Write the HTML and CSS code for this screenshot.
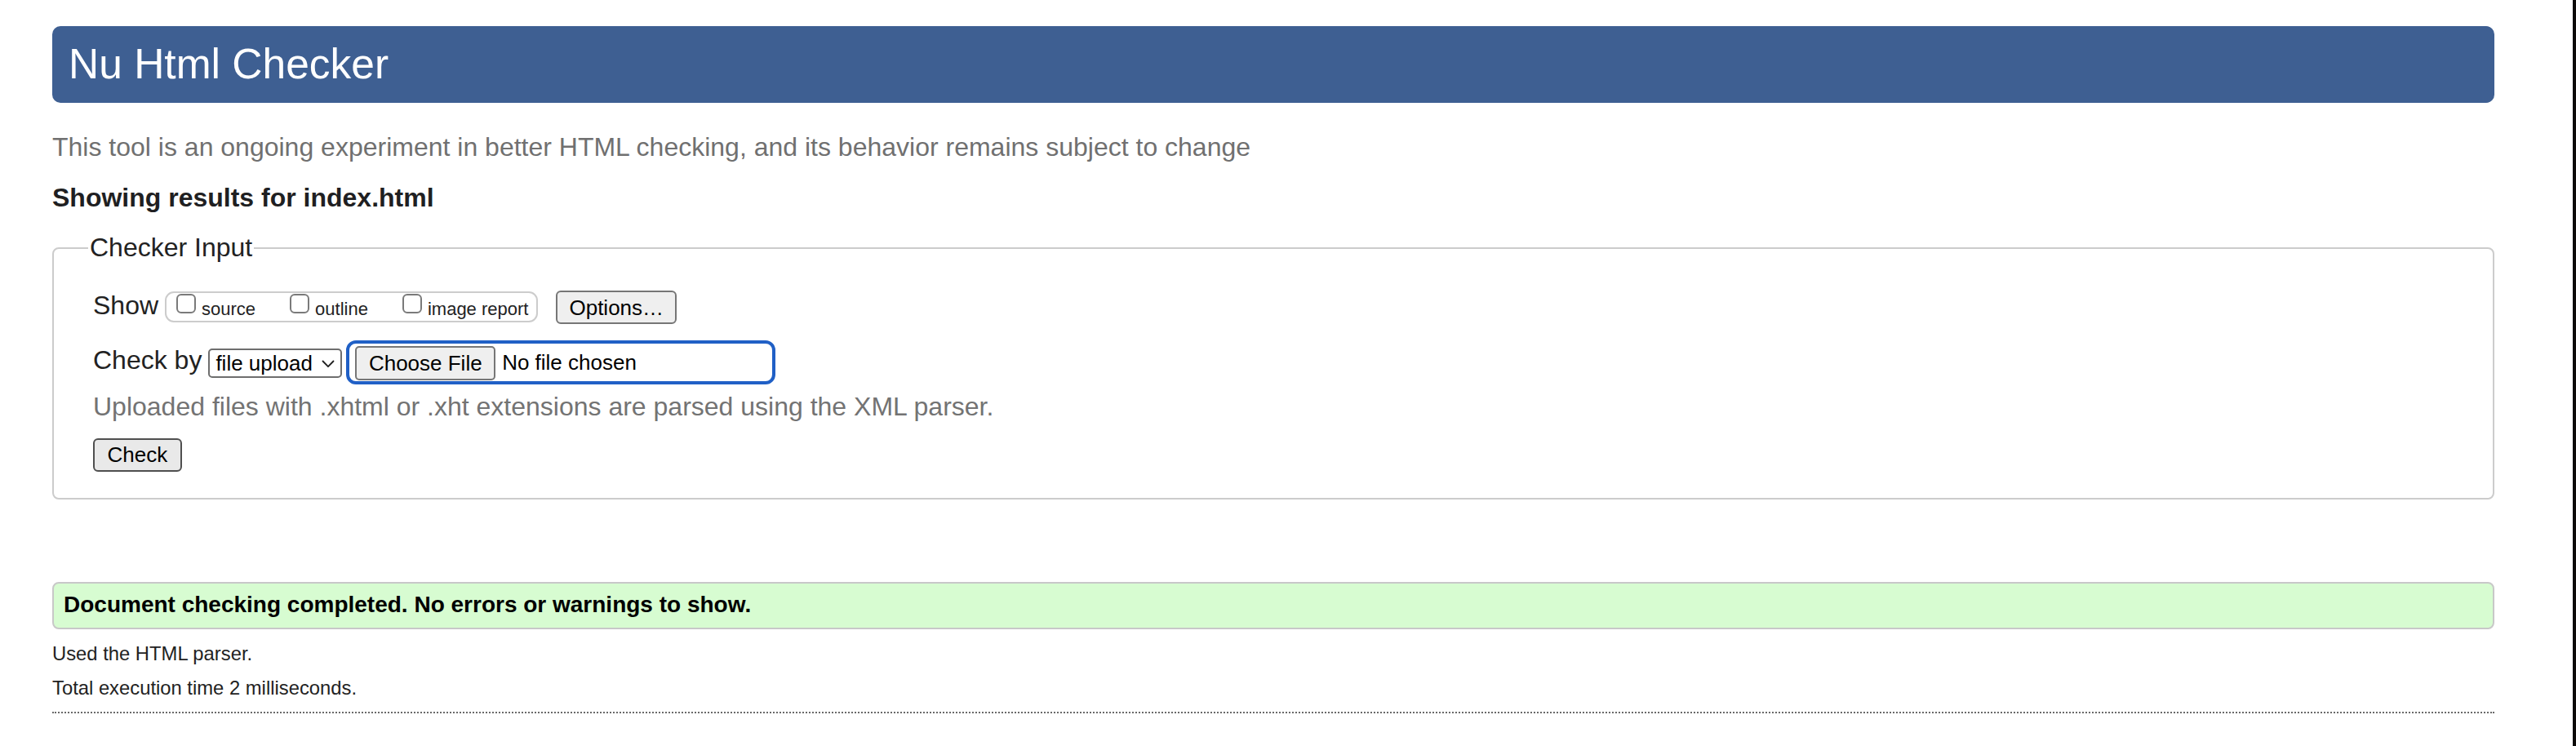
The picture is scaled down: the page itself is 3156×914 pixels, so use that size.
FILE: index.html
```html
<!DOCTYPE html>
<html lang="en">
<head>
<meta charset="utf-8">
<title>Nu Html Checker</title>
<link rel="stylesheet" href="styles.css">
</head>
<body>
<h1 class="banner">Nu Html Checker</h1>
<p class="intro">This tool is an ongoing experiment in better HTML checking, and its behavior remains subject to change</p>
<h2 class="results-for">Showing results for index.html</h2>
<form class="checker">
  <fieldset class="checker-input">
    <legend class="checker-legend">Checker Input</legend>
    <div class="row row-show">
      <span class="row-label label-show">Show</span>
      <div class="show-group">
        <label class="opt"><input type="checkbox" class="cb"><span class="opt-text">source</span></label>
        <label class="opt"><input type="checkbox" class="cb"><span class="opt-text">outline</span></label>
        <label class="opt"><input type="checkbox" class="cb"><span class="opt-text">image report</span></label>
      </div>
      <button type="button" class="btn btn-options">Options…</button>
    </div>
    <div class="row row-by">
      <span class="row-label label-by">Check by</span>
      <span class="select-wrap">
        <select class="by-select"><option>file upload</option></select>
        <svg class="chev" width="16" height="10" viewBox="0 0 16 10" aria-hidden="true"><path d="M1.5 1.5 L8 8.2 L14.5 1.5" fill="none" stroke="#1e1e1e" stroke-width="1.8" stroke-linecap="round" stroke-linejoin="round"/></svg>
      </span>
      <div class="file-ring">
        <button type="button" class="btn btn-file">Choose File</button>
        <span class="file-name">No file chosen</span>
      </div>
    </div>
    <p class="hint">Uploaded files with .xhtml or .xht extensions are parsed using the XML parser.</p>
    <button type="submit" class="btn btn-check">Check</button>
  </fieldset>
</form>
<p class="success">Document checking completed. No errors or warnings to show.</p>
<div class="meta">
  <p class="meta-line">Used the HTML parser.</p>
  <p class="meta-line">Total execution time 2 milliseconds.</p>
</div>
<hr class="rule">
</body>
</html>
```

FILE: styles.css
```css
html {
  min-height: 100%;
  background: linear-gradient(to right, #ffffff 0, #ffffff calc(100% - 4px), #0c0a08 calc(100% - 4px));
}

body {
  margin: 0;
  padding: 32px 100px 0 64px;
  font-family: "Liberation Sans", Arial, Helvetica, sans-serif;
  color: #222222;
}

.banner {
  margin: 0;
  padding: 18px 20px 19px;
  background: #3e5f92;
  color: #ffffff;
  font-size: 51.5px;
  font-weight: normal;
  line-height: 57px;
  border-radius: 10px;
}

.intro {
  margin: 36px 0 0;
  font-size: 32px;
  line-height: 37px;
  color: #707070;
}

.results-for {
  margin: 25px 0 0;
  font-size: 32px;
  line-height: 37px;
  font-weight: bold;
  color: #1f1f22;
}

.checker {
  margin: 0;
}

.checker-input {
  margin: 24px 0 0;
  padding: 34px 48px 32px;
  border: 2px solid #cccccc;
  border-radius: 8px;
  min-width: 0;
}

.checker-legend {
  margin-left: -6px;
  padding: 0 2px;
  font-size: 32px;
  line-height: 37px;
  color: #222222;
}

.row {
  display: flex;
  align-items: flex-start;
}

.row-by {
  margin-top: 20px;
}

.row-label {
  font-size: 32px;
  line-height: 37px;
  color: #222222;
}

.label-show {
  margin-right: 8px;
}

.label-by {
  margin-top: 6px;
  margin-right: 8px;
}

.show-group {
  display: flex;
  align-items: flex-start;
  gap: 42px;
  box-sizing: border-box;
  height: 38px;
  margin-top: 1px;
  padding: 0 10px 0 12px;
  border: 2px solid #cccccc;
  border-radius: 11px;
}

.opt {
  display: flex;
  align-items: flex-start;
  gap: 7px;
}

.cb {
  -webkit-appearance: none;
  appearance: none;
  box-sizing: border-box;
  width: 24px;
  height: 24px;
  margin: 1px 0 0;
  border: 2px solid #7a7a7a;
  border-radius: 6px;
  background: #ffffff;
}

.opt-text {
  margin-top: 7px;
  font-size: 22px;
  line-height: 25px;
  color: #222222;
}

.btn {
  box-sizing: border-box;
  margin: 0;
  font-family: "Liberation Sans", Arial, Helvetica, sans-serif;
  font-size: 26px;
  line-height: 30px;
  color: #000000;
  background: #efefef;
  border: 2px solid #767676;
  border-radius: 6px;
}

.btn-options {
  height: 41px;
  margin-left: 22px;
  padding: 0 14px;
}

.select-wrap {
  position: relative;
  display: block;
  margin-top: 10px;
}

.by-select {
  -webkit-appearance: none;
  appearance: none;
  display: block;
  box-sizing: border-box;
  width: 164px;
  height: 36px;
  margin: 0;
  padding: 0 0 0 7px;
  font-family: "Liberation Sans", Arial, Helvetica, sans-serif;
  font-size: 26px;
  line-height: 30px;
  color: #000000;
  background: #ffffff;
  border: 2px solid #6e6e6e;
  border-radius: 5px;
}

.chev {
  position: absolute;
  right: 9px;
  top: 14px;
  pointer-events: none;
}

.file-ring {
  display: flex;
  align-items: flex-start;
  box-sizing: border-box;
  width: 526px;
  height: 54px;
  margin-left: 5px;
  padding: 3px 7px 1px;
  border: 4px solid #2060c6;
  border-radius: 12px;
}

.btn-file {
  height: 42px;
  padding: 0 14.5px;
  border-radius: 5px;
}

.file-name {
  margin: 5px 0 0 8px;
  font-size: 26px;
  line-height: 30px;
  color: #000000;
}

.hint {
  margin: 9.4px 0 0;
  font-size: 32px;
  line-height: 37px;
  color: #737373;
}

.btn-check {
  display: block;
  height: 41px;
  margin-top: 19.6px;
  padding: 0 15.5px;
  background: #e9e9e9;
  border-color: #4f4f4f;
}

.success {
  margin: 101px 0 0;
  padding: 10.3px 12px 11.7px;
  border: 2px solid #c8c8c8;
  border-radius: 8px;
  background: #d7fcd1;
  font-size: 28px;
  line-height: 32px;
  font-weight: bold;
  color: #000000;
}

.meta {
  margin-top: 8.6px;
}

.meta-line {
  margin: 0;
  font-size: 23.8px;
  line-height: 42px;
  color: #222222;
}

.rule {
  height: 0;
  margin: 8px 0 0;
  border: 0;
  border-top: 2px dotted #6a6a6a;
}
```
